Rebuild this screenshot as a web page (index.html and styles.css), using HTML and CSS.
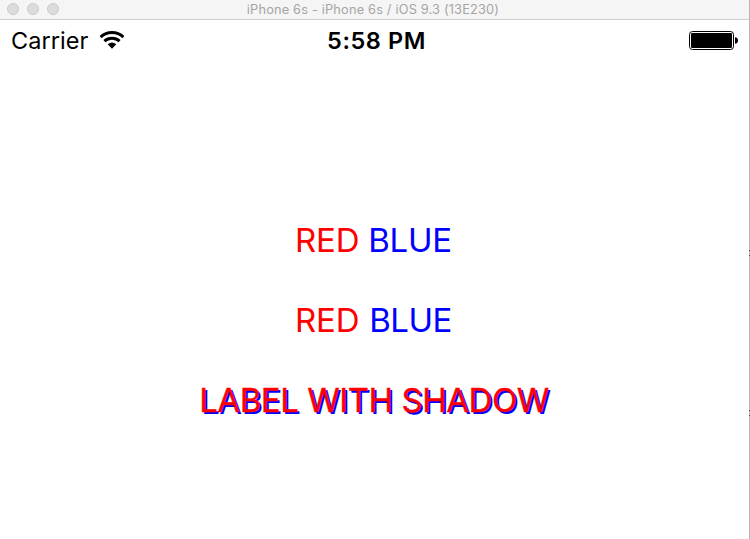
FILE: index.html
```html
<!DOCTYPE html>
<html lang="en">
<head>
<meta charset="utf-8">
<title>iPhone 6s</title>
<link rel="stylesheet" href="styles.css">
</head>
<body>
<div class="window">
  <header class="titlebar">
    <div class="lights"><i></i><i></i><i></i></div>
    <span class="title">iPhone 6s - iPhone 6s / iOS 9.3 (13E230)</span>
  </header>
  <div class="statusbar">
    <div class="left">
      <span class="carrier">Carrier</span>
      <svg class="wifi" width="26" height="20" viewBox="0 0 26 20">
        <g fill="none" stroke="#000" stroke-width="3">
          <path d="M1.6 7.2Q6.5 2.6 13 2.6T24.4 7.2"/>
          <path d="M5.4 11.2Q8.7 8.3 13 8.3T20.6 11.2"/>
        </g>
        <path d="M8.7 14.3Q13 10.9 17.3 14.3L13 18.7Z"/>
      </svg>
    </div>
    <span class="time">5:58 PM</span>
    <svg class="battery" width="50" height="20" viewBox="0 0 50 20">
      <rect x=".5" y=".5" width="44" height="18" rx="3" fill="#fff" stroke="#000"/>
      <rect x="2" y="2" width="41" height="15" rx="1.2"/>
      <path d="M46 6.2Q49 6.5 49 9.5T46 12.8Z"/>
    </svg>
  </div>
  <main class="labels">
    <p class="label pair"><span class="red">RED</span> <span class="blue">BLUE</span></p>
    <p class="label pair second"><span class="red">RED</span> <span class="blue">BLUE</span></p>
    <p class="label shadow">LABEL WITH SHADOW</p>
  </main>
</div>
<i class="edge-mark upper"></i>
<i class="edge-mark lower"></i>
</body>
</html>
```
FILE: styles.css
```css
* { box-sizing: border-box; }
body { margin: 0; font-family: Inter, "Liberation Sans", sans-serif; background: #fff; overflow: hidden; }
.window { width: 750px; height: 539px; display: flex; flex-direction: column; border-right: 1px solid #b8b8b8; }
.titlebar { height: 20px; flex: none; display: grid; grid-template-columns: 80px 1fr 83px; background: #f5f5f5; border-bottom: 1px solid #cfcfcf; }
.lights { display: flex; gap: 8px; padding: 3px 0 0 7px; }
.lights i { width: 12px; height: 12px; border-radius: 50%; background: #dcdcdc; border: 1px solid #cacaca; }
.title { text-align: center; font-size: 12.8px; letter-spacing: .17px; line-height: 19px; color: #a5a5a5; white-space: nowrap; }
.statusbar { height: 40px; flex: none; display: grid; grid-template-columns: 1fr 102px 1fr; grid-template-rows: 40px; align-items: center; padding: 0 10px 0 11px; color: #000; }
.left { display: flex; align-items: center; gap: 11px; }
.carrier { font-size: 23.5px; line-height: 38px; letter-spacing: .05px; padding-top: 2px; }
.time { font-size: 23.5px; font-weight: 600; line-height: 38px; letter-spacing: .6px; padding: 2px 0 0 3px; text-align: center; white-space: nowrap; }
.battery { justify-self: end; margin-top: 2px; }
.labels { display: flex; flex-direction: column; align-items: center; gap: 40px; padding-top: 160px; }
.label { margin: 0; height: 40px; font-size: 33px; line-height: 40px; white-space: nowrap; }
.red { color: #f00; }
.blue { color: #00f; }
.pair { letter-spacing: -.25px; padding-right: 2px; }
.second .red { margin-right: 1px; }
.second .blue { letter-spacing: -.5px; }
.shadow { color: #f00; text-shadow: 2px 2px 0 #00f; letter-spacing: -.45px; padding-right: 1px; -webkit-text-stroke: .3px #f00; }
.edge-mark { position: absolute; right: 0; width: 1px; height: 6px; border-top: 1px solid #444; border-bottom: 1px solid #444; }
.upper { top: 250px; }
.lower { top: 410px; }
```
